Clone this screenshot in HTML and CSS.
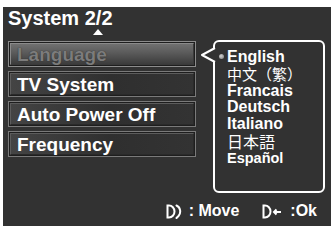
FILE: index.html
```html
<!DOCTYPE html>
<html lang="en">
<head>
    <meta charset="UTF-8">
    <title>System 2/2</title>
    <link rel="stylesheet" href="styles.css">
</head>
<body>

    <div class="screen">
        <div class="screen-title">System 2/2</div>
        <div class="page-mark"></div>

        <div class="screen-main">
            <ul class="menu">
                <li class="menu-item is-open"><span>Language</span></li>
                <li class="menu-item"><span>TV System</span></li>
                <li class="menu-item"><span>Auto Power Off</span></li>
                <li class="menu-item"><span>Frequency</span></li>
            </ul>

            <div class="popup">
                <svg class="popup-tail" width="16" height="18" viewBox="0 0 16 18">
                    <polygon points="16,1 2,8 16,15" fill="#323232"/>
                    <polyline points="15,1 2,8 15,15" fill="none" stroke="#fff" stroke-width="2" stroke-linejoin="round"/>
                </svg>
                <ul class="lang-list">
                    <li class="is-current">English</li>
                    <li class="cjk" lang="zh-Hant">中文（繁）</li>
                    <li>Francais</li>
                    <li>Deutsch</li>
                    <li>Italiano</li>
                    <li class="cjk" lang="ja">日本語</li>
                    <li class="narrow">Español</li>
                </ul>
            </div>
        </div>

        <div class="hints">
            <div class="hint hint-move">
                <svg width="17" height="15" viewBox="0 0 17 15">
                    <path d="M1.5 1.5 V13.5 H3 A5.5 6 0 0 0 3 1.5 Z" fill="none" stroke="#fff" stroke-width="2"/>
                    <path d="M10.5 1.5 A6 6.5 0 0 1 12.5 12 L10.5 14" fill="none" stroke="#fff" stroke-width="2" stroke-linecap="round"/>
                </svg>
                <span class="hint-text">: Move</span>
            </div>
            <div class="hint">
                <svg width="26" height="15" viewBox="0 0 26 15">
                    <path d="M1.5 1.5 V13.5 H3 A5.5 6 0 0 0 3 1.5 Z" fill="none" stroke="#fff" stroke-width="2"/>
                    <path d="M12 8 H19 M14.5 5.5 L12 8 L14.5 10.5" fill="none" stroke="#fff" stroke-width="2"/>
                </svg>
                <span class="hint-text">:Ok</span>
            </div>
        </div>
    </div>

</body>
</html>
```

FILE: styles.css
```css
body {
    margin: 0;
    padding: 0;
    background-color: #fff;
    font-family: "Liberation Sans", Arial, sans-serif;
}

ul {
    list-style: none;
    margin: 0;
    padding: 0;
}

.screen {
    margin: 7px 0 0 3px;
    width: 328px;
    height: 219px;
    box-sizing: border-box;
    padding: 2px 6px 0 5px;
    background-color: #323232;
    color: #fff;
}

.screen-title {
    font-size: 20px;
    line-height: 19px;
    font-weight: bold;
}

.page-mark {
    width: 0;
    height: 0;
    margin: 1px 0 0 85px;
    border-left: 5.5px solid transparent;
    border-right: 5.5px solid transparent;
    border-bottom: 6px solid #fff;
}

.screen-main {
    display: flex;
    gap: 17px;
    margin-top: 5px;
    height: 153px;
}

.menu {
    width: 188px;
    margin-top: 1px;
    display: flex;
    flex-direction: column;
    gap: 4px;
}

.menu-item {
    height: 26px;
    box-sizing: border-box;
    border: 1px solid #7a7a7a;
    padding: 1px;
    background-color: #1e1e1e;
}

.menu-item span {
    display: flex;
    align-items: center;
    height: 100%;
    box-sizing: border-box;
    padding-left: 6px;
    border: 1px solid;
    border-color: #5c5c5c #2a2a2a #2a2a2a #5c5c5c;
    background: linear-gradient(90deg, #444 0%, #2f2f2f 55%, #333 100%);
    font-size: 19px;
    font-weight: bold;
    line-height: 19px;
}

.menu-item.is-open {
    border-color: #8c8c8c;
}

.menu-item.is-open span {
    border-color: #8a8a8a #3a3a3a #3a3a3a #8a8a8a;
    background: linear-gradient(#707070 0%, #5a5a5a 45%, #3c3c3c 100%);
    color: #7c7c7c;
    text-shadow: 0 0 1px #222;
}

.popup {
    position: relative;
    width: 112px;
    box-sizing: border-box;
    border: 2px solid #fff;
    border-radius: 6px;
    padding: 7px 0 0 12px;
}

.popup-tail {
    position: absolute;
    left: -15px;
    top: 5px;
}

.lang-list li {
    position: relative;
    font-size: 16px;
    line-height: 16.8px;
    font-weight: bold;
}

.lang-list li.is-current::before {
    content: "";
    position: absolute;
    left: -8px;
    top: 5px;
    width: 5px;
    height: 5px;
    border-radius: 50%;
    background: radial-gradient(circle at 40% 40%, #d0d0d0, #7a7a7a);
}

.lang-list li.cjk {
    font-family: "Noto Sans CJK TC", "Noto Sans CJK JP", sans-serif;
    font-weight: normal;
    font-size: 15px;
}

.lang-list li.cjk:lang(ja) {
    font-family: "Noto Sans CJK JP", sans-serif;
    font-size: 16px;
}

.lang-list li.narrow {
    font-size: 14.5px;
}

.hints {
    display: flex;
    justify-content: flex-end;
    gap: 23px;
    margin-top: 10px;
    padding-right: 8px;
}

.hint {
    display: flex;
    align-items: center;
}

.hint svg {
    display: block;
    margin-right: 2px;
}

.hint-move svg {
    margin-right: 6px;
}

.hint-text {
    font-size: 16px;
    line-height: 16px;
    font-weight: bold;
}
```
